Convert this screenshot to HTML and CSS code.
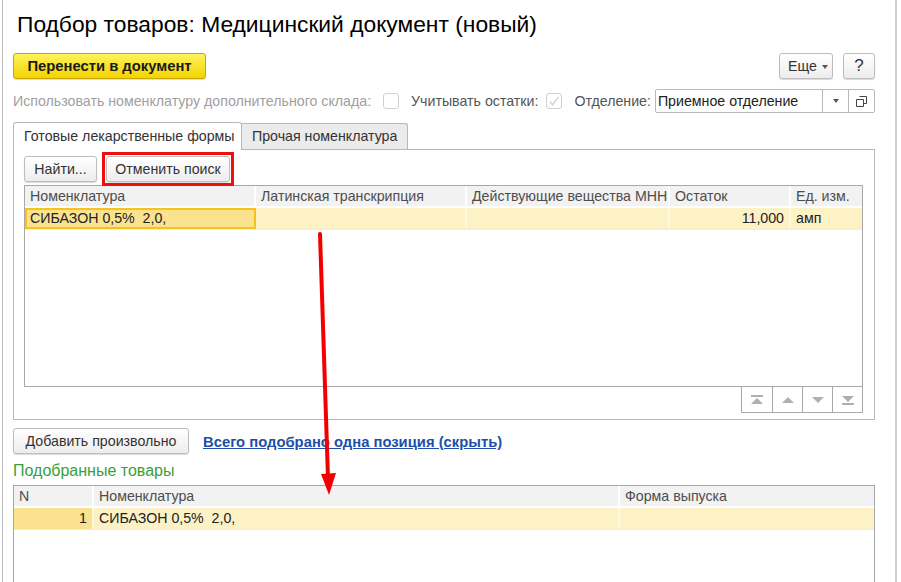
FILE: index.html
```html
<!DOCTYPE html>
<html lang="ru">
  <head>
    <meta charset="UTF-8" />
    <title>Подбор товаров</title>
    <link rel="stylesheet" href="styles.css">
  </head>
  <body>
    <div class="window">
      <h1 class="title">Подбор товаров: Медицинский документ (новый)</h1>

      <div class="toolbar">
        <button class="btn btn-primary">Перенести в документ</button>
        <div class="spacer"></div>
        <button class="btn btn-more">Еще<span class="caret"></span></button>
        <button class="btn btn-help">?</button>
      </div>

      <div class="options">
        <span class="label disabled">Использовать номенклатуру дополнительного склада:</span>
        <span class="checkbox"></span>
        <span class="label">Учитывать остатки:</span>
        <span class="checkbox">
          <svg width="15" height="15" viewBox="0 0 15 15"><path d="M3 7.5 L6 11 L12.5 2.5" fill="none" stroke="#d4d4d4" stroke-width="1.6"/></svg>
        </span>
        <span class="label label-combo">Отделение:</span>
        <div class="combo">
          <span class="combo-text">Приемное отделение</span>
          <span class="combo-btn"><span class="caret"></span></span>
          <span class="combo-btn">
            <svg width="13" height="13" viewBox="0 0 13 13"><path d="M4.5 1.5 H11.5 V8.5 H8.5 M1.5 4.5 H8.5 V11.5 H1.5 Z" fill="none" stroke="#444" stroke-width="1"/></svg>
          </span>
        </div>
      </div>

      <div class="tabs">
        <div class="tab active">Готовые лекарственные формы</div>
        <div class="tab">Прочая номенклатура</div>
      </div>
      <div class="tab-panel">
        <div class="search-bar">
          <button class="btn btn-find">Найти...</button>
          <span class="marked"><button class="btn">Отменить поиск</button></span>
        </div>
        <div class="grid goods">
          <div class="grid-head">
            <div class="cell">Номенклатура</div>
            <div class="cell">Латинская транскрипция</div>
            <div class="cell">Действующие вещества МНН</div>
            <div class="cell">Остаток</div>
            <div class="cell">Ед. изм.</div>
          </div>
          <div class="grid-row">
            <div class="cell current">СИБАЗОН 0,5%&nbsp; 2,0,</div>
            <div class="cell"></div>
            <div class="cell"></div>
            <div class="cell num">11,000</div>
            <div class="cell">амп</div>
          </div>
        </div>
        <div class="grid-footer">
          <div class="nav">
            <span class="nav-btn"><svg width="14" height="10" viewBox="0 0 14 10"><rect x="1" y="0" width="12" height="2" fill="#b0b0b0"/><path d="M1 9 L7 3 L13 9 Z" fill="#b0b0b0"/></svg></span>
            <span class="nav-btn"><svg width="14" height="10" viewBox="0 0 14 10"><path d="M1 8 L7 2 L13 8 Z" fill="#b0b0b0"/></svg></span>
            <span class="nav-btn"><svg width="14" height="10" viewBox="0 0 14 10"><path d="M1 2 L7 8 L13 2 Z" fill="#b0b0b0"/></svg></span>
            <span class="nav-btn"><svg width="14" height="10" viewBox="0 0 14 10"><path d="M1 1 L7 7 L13 1 Z" fill="#b0b0b0"/><rect x="1" y="8" width="12" height="2" fill="#b0b0b0"/></svg></span>
          </div>
        </div>
      </div>

      <div class="actions">
        <button class="btn btn-add">Добавить произвольно</button>
        <a class="link" href="#">Всего подобрано одна позиция (скрыть)</a>
      </div>

      <div class="section-title">Подобранные товары</div>
      <div class="grid selected">
        <div class="grid-head">
          <div class="cell">N</div>
          <div class="cell">Номенклатура</div>
          <div class="cell">Форма выпуска</div>
        </div>
        <div class="grid-row">
          <div class="cell num marker">1</div>
          <div class="cell">СИБАЗОН 0,5%&nbsp; 2,0,</div>
          <div class="cell"></div>
        </div>
      </div>

      <svg class="arrow" width="901" height="582" viewBox="0 0 901 582">
        <line x1="320" y1="234" x2="328" y2="478" stroke="#f20000" stroke-width="4" stroke-linecap="round"/>
        <path d="M321 474 L336 473 L329 495 Z" fill="#f20000"/>
      </svg>
    </div>
  </body>
</html>
```

FILE: styles.css
```css
* {
  box-sizing: border-box;
}
body {
  margin: 0;
  background-color: #fff;
  font-family: "Liberation Sans", Arial, sans-serif;
  font-size: 14.2px;
  color: #333;
  overflow: hidden;
}
.window {
  position: relative;
  margin-left: 2px;
  width: 895px;
  height: 582px;
  padding: 0 20px 0 10px;
  border-left: 1px solid #bdbdbd;
  border-right: 2px solid #cfcfcf;
  overflow: hidden;
}
.title {
  margin: 0;
  padding: 10px 0 0 4px;
  height: 38px;
  font-size: 22.8px;
  font-weight: normal;
  line-height: 28px;
  color: #000;
}
.toolbar {
  display: flex;
  align-items: center;
  gap: 10px;
  margin-top: 15px;
}
.spacer {
  flex: 1;
}
.btn {
  height: 26px;
  padding: 0 10px;
  font-family: inherit;
  font-size: 14.2px;
  color: #333;
  white-space: nowrap;
  background: linear-gradient(#ffffff, #ededed);
  border: 1px solid #bdbdbd;
  border-radius: 3px;
  box-shadow: 0 1px 1px rgba(0, 0, 0, 0.15);
  cursor: pointer;
}
.btn-primary {
  width: 193px;
  padding: 0;
  font-size: 14.8px;
  font-weight: bold;
  color: #1a1a1a;
  background: linear-gradient(#fff25c, #f3d300);
  border-color: #c9a900;
}
.btn-more {
  width: 54px;
  padding: 0 4px 0 8px;
}
.btn-help {
  width: 32px;
  padding: 0;
  font-size: 17px;
}
.caret {
  display: inline-block;
  width: 0;
  height: 0;
  margin-left: 5px;
  vertical-align: middle;
  border-left: 3.5px solid transparent;
  border-right: 3.5px solid transparent;
  border-top: 4px solid #555;
}
.options {
  display: flex;
  align-items: center;
  margin-top: 10px;
  height: 24px;
}
.label {
  color: #555;
  margin-right: 8px;
  white-space: nowrap;
}
.label.disabled {
  color: #a0a0a0;
  margin-right: 12px;
}
.label-combo {
  margin-right: 4px;
}
.checkbox {
  display: inline-flex;
  flex: none;
  width: 16px;
  height: 16px;
  margin-right: 12px;
  border: 1px solid #d0d0d0;
  border-radius: 3px;
  background: #fff;
}
.combo {
  display: flex;
  flex: 1;
  height: 24px;
  border: 1px solid #b8b8b8;
  border-radius: 2px;
  background: #fff;
}
.combo-text {
  flex: 1;
  padding: 0 2px;
  line-height: 22px;
  color: #222;
  white-space: nowrap;
}
.combo-btn {
  display: flex;
  align-items: center;
  justify-content: center;
  width: 26px;
  border-left: 1px solid #b8b8b8;
}
.combo-btn .caret {
  margin: 0;
}
.tabs {
  display: flex;
  margin-top: 8px;
  height: 28px;
  align-items: flex-end;
}
.tab {
  height: 26px;
  padding: 0 10px;
  line-height: 25px;
  color: #333;
  white-space: nowrap;
  background: #ebebeb;
  border: 1px solid #b8b8b8;
  border-bottom: none;
  border-left: none;
  border-radius: 0 3px 0 0;
}
.tab.active {
  position: relative;
  width: 229px;
  height: 28px;
  line-height: 27px;
  margin-bottom: -1px;
  background: #fff;
  border-left: 1px solid #b8b8b8;
  border-radius: 3px 3px 0 0;
}
.tab-panel {
  height: 271px;
  padding: 6px 11px 0 10px;
  border: 1px solid #b8b8b8;
}
.search-bar {
  display: flex;
  align-items: center;
  gap: 5px;
  height: 26px;
}
.btn-find {
  width: 73px;
  padding: 0;
}
.marked {
  display: flex;
  padding: 1px;
  border: 3px solid #ee1010;
}
.marked .btn {
  width: 124px;
  padding: 0;
}
.grid {
  border: 1px solid #a8a8a8;
  background: #fff;
}
.goods {
  margin-top: 3px;
  height: 202px;
}
.grid-head,
.grid-row {
  display: grid;
}
.goods .grid-head,
.goods .grid-row {
  grid-template-columns: 231px 211px 203px 121px 1fr;
}
.selected .grid-head,
.selected .grid-row {
  grid-template-columns: 80px 526px 1fr;
}
.grid-head .cell {
  height: 22px;
  line-height: 21px;
  padding: 0 5px;
  color: #4d4d4d;
  background: #f2f2f2;
  border-right: 2px solid #fff;
  border-bottom: 2px solid #fff;
  white-space: nowrap;
  overflow: hidden;
}
.grid-row {
  border-bottom: 1px solid #ececec;
}
.grid-row .cell {
  height: 21px;
  line-height: 21px;
  padding: 0 5px;
  color: #222;
  background: #fdf1c6;
  border-right: 2px solid #fff7e0;
  white-space: nowrap;
}
.grid-head .cell:last-child,
.grid-row .cell:last-child {
  border-right: none;
}
.cell.num {
  text-align: right;
}
.cell.current {
  background: #fbe28f;
  border: 2px solid #f6c31c;
  line-height: 17px;
  padding-left: 3px;
}
.cell.marker {
  background: #fbe28f;
}
.grid-footer {
  display: flex;
  justify-content: flex-end;
  margin-top: -1px;
}
.nav {
  display: flex;
  border: 1px solid #a8a8a8;
}
.nav-btn {
  display: flex;
  align-items: center;
  justify-content: center;
  width: 30px;
  height: 25px;
  border-left: 1px solid #a8a8a8;
}
.nav-btn:first-child {
  border-left: none;
}
.actions {
  display: flex;
  align-items: center;
  gap: 14px;
  margin-top: 8px;
}
.btn-add {
  width: 176px;
  padding: 0;
}
.link {
  margin-top: 2px;
  font-size: 14.8px;
  font-weight: bold;
  color: #1e4fa8;
  white-space: nowrap;
}
.section-title {
  margin-top: 7px;
  height: 24px;
  line-height: 20px;
  font-size: 16px;
  color: #37a037;
}
.selected {
  height: 120px;
}
.arrow {
  position: absolute;
  left: -3px;
  top: 0;
  pointer-events: none;
}
```
